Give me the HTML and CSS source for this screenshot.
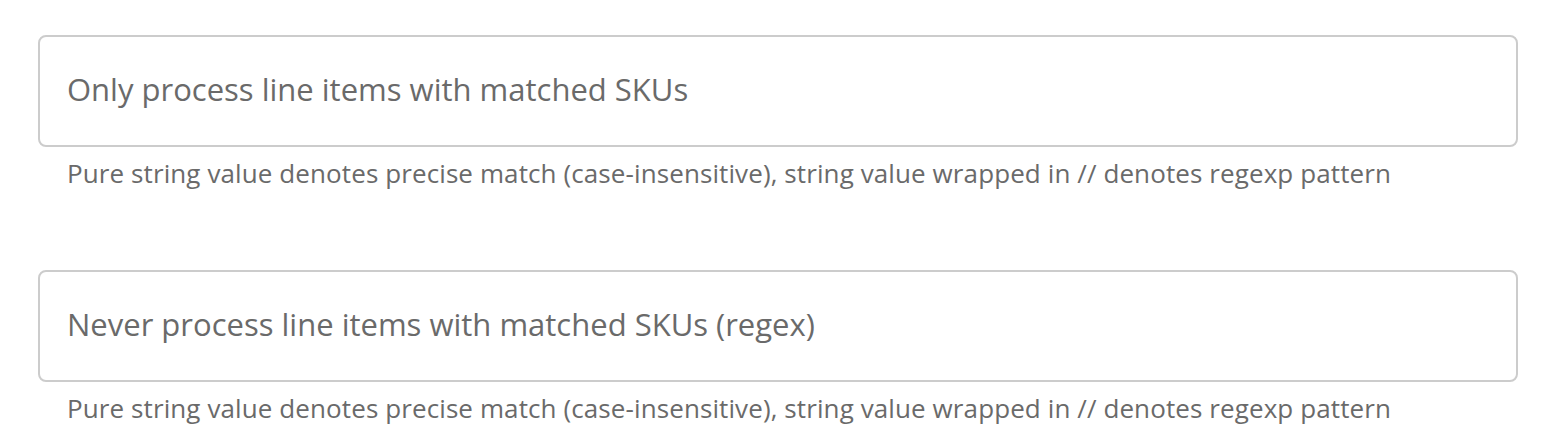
FILE: index.html
```html
<!DOCTYPE html>
<html lang="en">
<head>
    <meta charset="UTF-8">
    <title>SKU filters</title>
    <link rel="stylesheet" href="styles.css">
</head>
<body>
    <div class="form">
        <div class="field">
            <input class="field-input" type="text" placeholder="Only process line items with matched SKUs">
            <div class="field-help">Pure string value denotes precise match (case-insensitive), string value wrapped in // denotes regexp pattern</div>
        </div>
        <div class="field">
            <input class="field-input" type="text" placeholder="Never process line items with matched SKUs (regex)">
            <div class="field-help">Pure string value denotes precise match (case-insensitive), string value wrapped in // denotes regexp pattern</div>
        </div>
    </div>
</body>
</html>
```

FILE: styles.css
```css
body {
    margin: 0;
    font-family: 'Open Sans', 'Lato', sans-serif;
    background: #fff;
    color: #666;
}
.form {
    display: flex;
    flex-direction: column;
    gap: 80px;
    padding: 35px 38px 0 38px;
}
.field-input {
    display: block;
    box-sizing: border-box;
    width: 100%;
    height: 112px;
    margin: 0;
    padding: 0 27px 4px 27px;
    border: 2px solid #cccccc;
    border-radius: 8px;
    font-family: inherit;
    font-size: 31px;
    color: #666;
    background: #fff;
    outline: none;
}
.field-input::placeholder {
    color: #6a6a6a;
    opacity: 1;
}
.field-help {
    margin-top: 9px;
    padding-left: 29px;
    font-size: 26px;
    line-height: 34px;
    letter-spacing: 0.1px;
    color: #6a6a6a;
}
```
